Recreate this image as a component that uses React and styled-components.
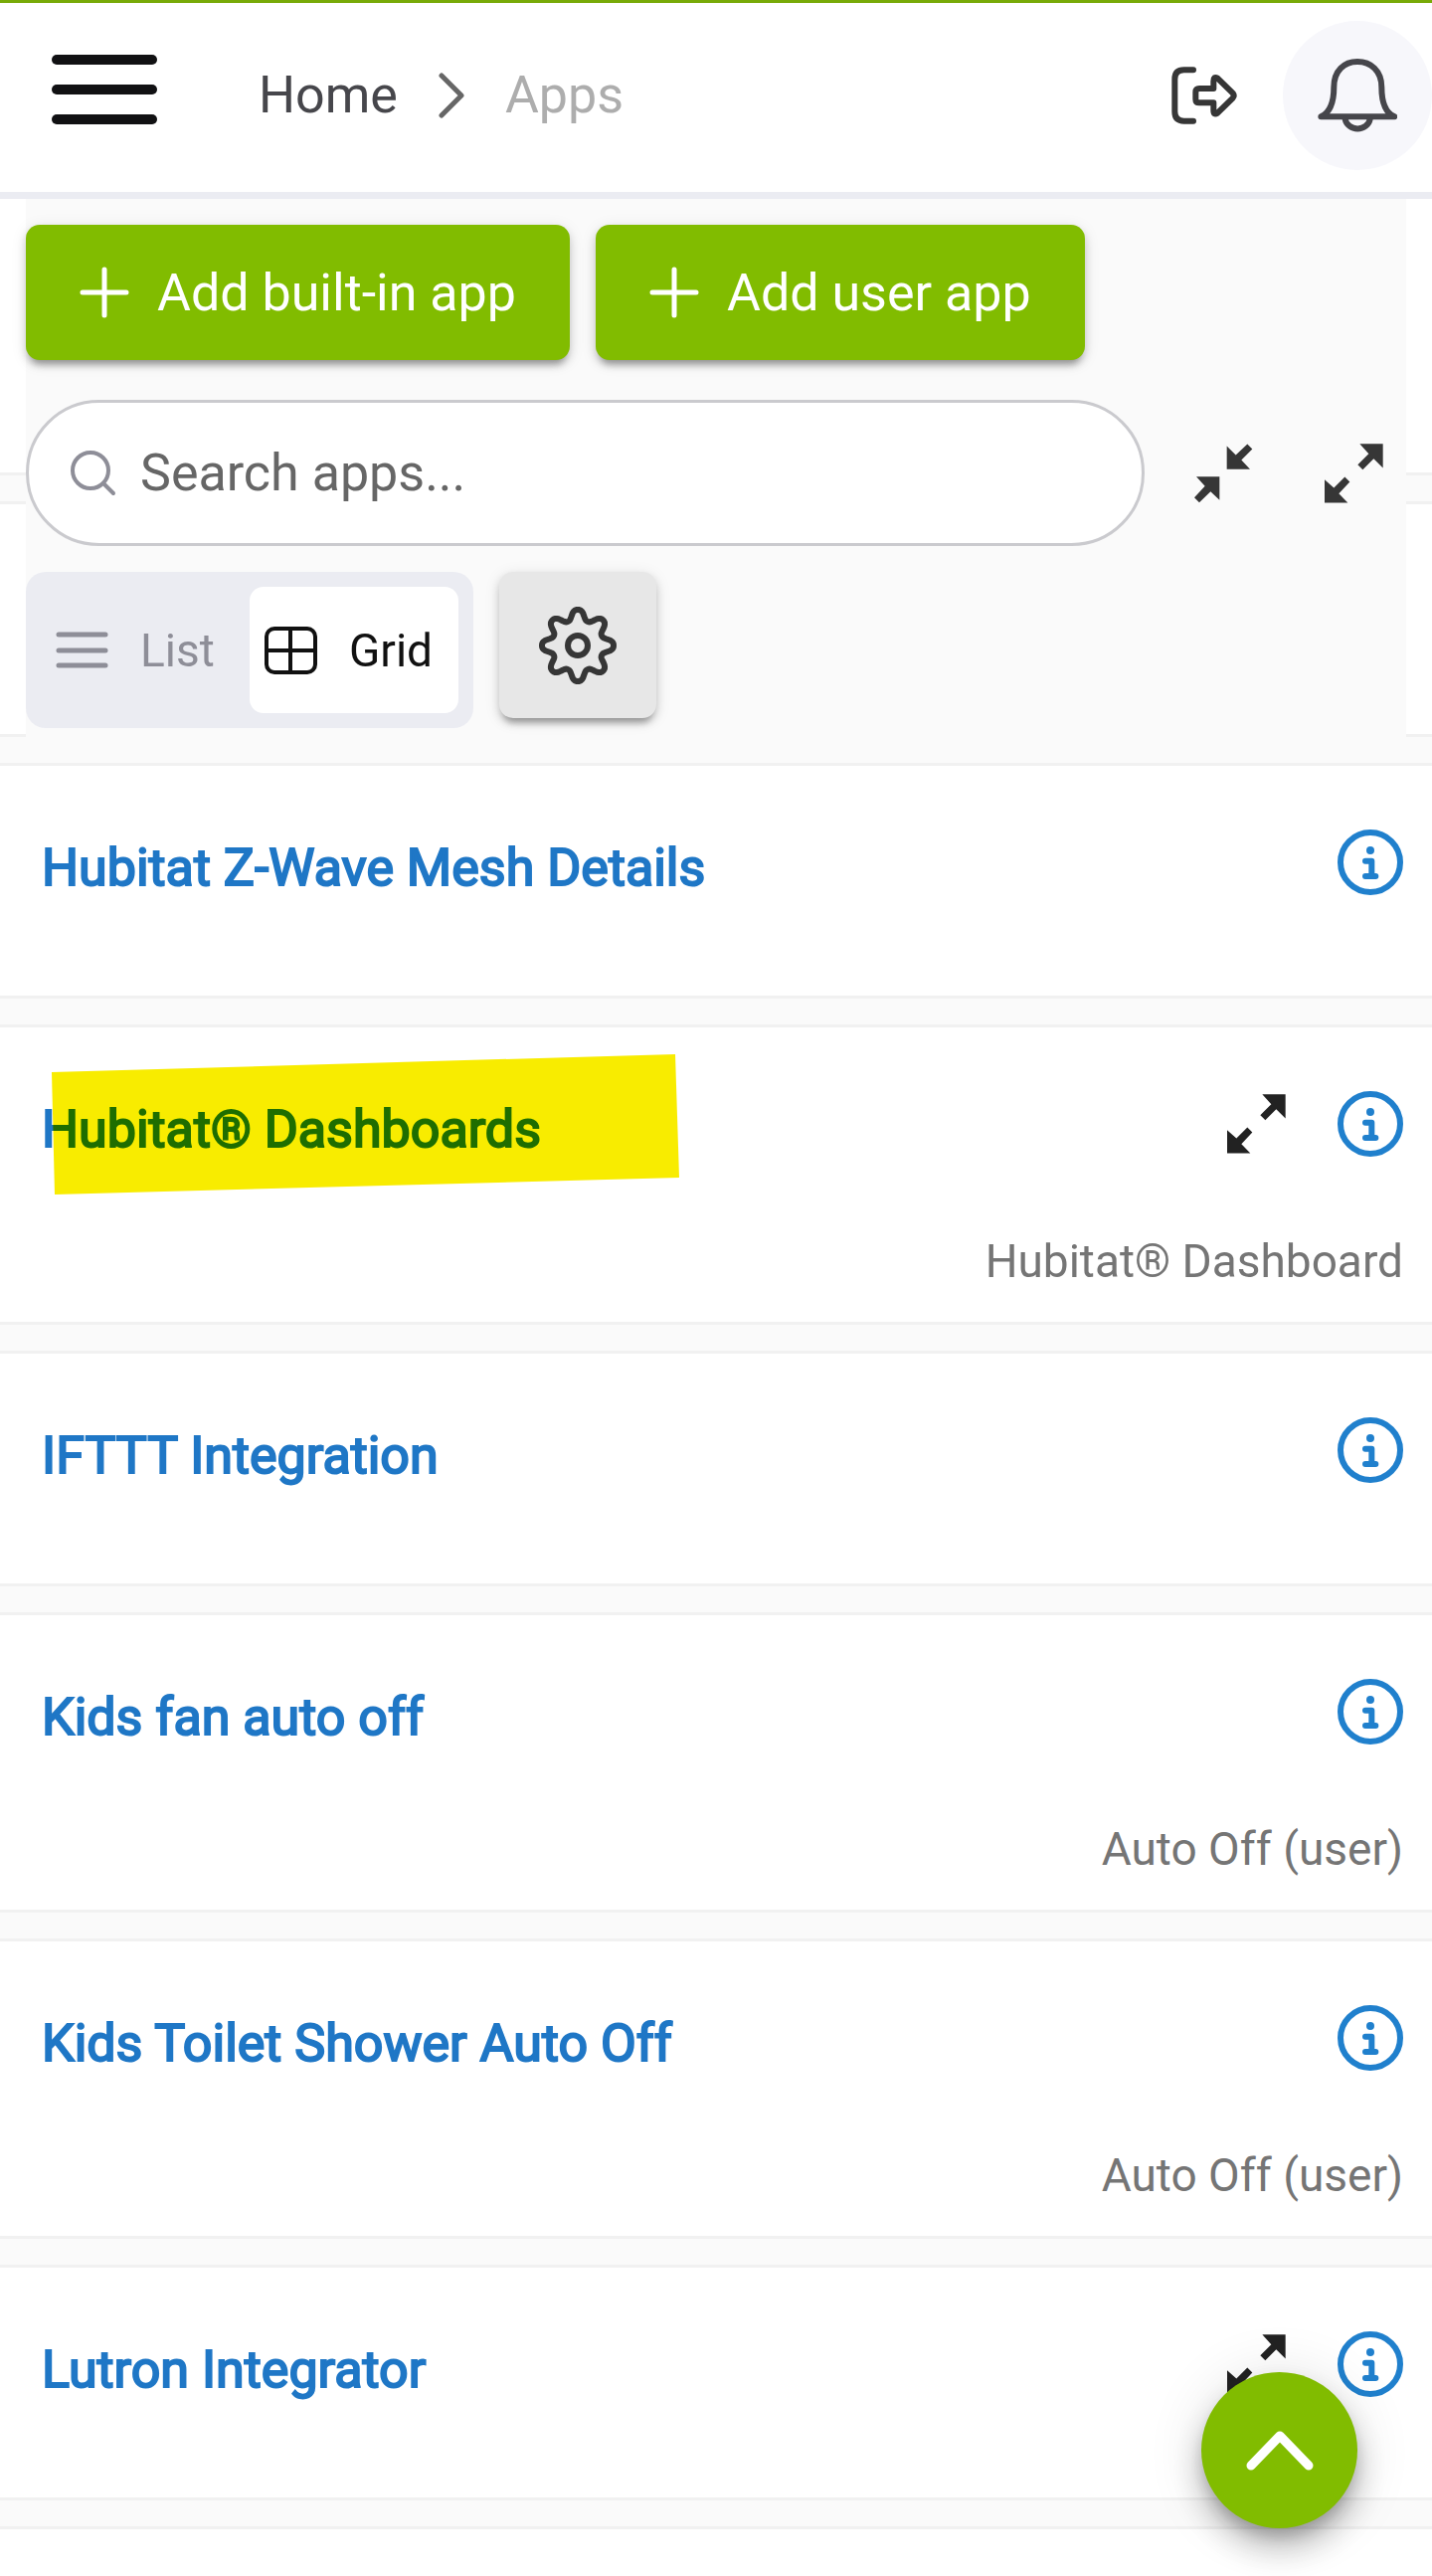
import styled, { createGlobalStyle } from "styled-components";

const apps = [
  { name: "Hubitat Z-Wave Mesh Details" },
  {
    name: "Hubitat® Dashboards",
    type: "Hubitat® Dashboard",
    expandable: true,
    marked: true,
  },
  { name: "IFTTT Integration" },
  { name: "Kids fan auto off", type: "Auto Off (user)" },
  { name: "Kids Toilet Shower Auto Off", type: "Auto Off (user)" },
  { name: "Lutron Integrator", expandable: true },
];

const BellIcon = () => (
  <svg width="80" height="80" viewBox="0 0 240 240" fill="none" stroke="#46464b" strokeWidth="18" strokeLinecap="round" strokeLinejoin="round">
    <path d="M10 184C40 170 49 130 49 95C49 45 80 18 120 18C160 18 193 45 193 95C193 130 200 170 232 184Z" />
    <path d="M83 191A38 35 0 0 0 158 191" />
  </svg>
);

const LogoutIcon = () => (
  <svg width="66" height="58" viewBox="0 0 198 174" fill="none" stroke="#363636" strokeWidth="18" strokeLinecap="round" strokeLinejoin="round">
    <path d="M66 10H38Q10 10 10 38V136Q10 164 38 164H66" />
    <path d="M84 66H127V44Q127 28 139 35L185 80Q191 88 185 95L139 140Q127 148 127 132V109H84Q73 109 73 98V77Q73 66 84 66Z" />
  </svg>
);

const ExpandIcon = () => (
  <svg width="59" height="60" viewBox="0 0 177 179" fill="currentColor">
    <path d="M106 0H176V73L148 45L115 78L100 63L133 30Z" />
    <path d="M0 108V178H70L43 150L76 115L61 100L28 133Z" />
  </svg>
);

const CollapseIcon = () => (
  <svg width="59" height="60" viewBox="0 0 177 177" fill="currentColor">
    <path d="M98 6L125 33L160 0L175 15L142 48L168 76H98Z" />
    <path d="M6 98H76V169L49 143L15 176L0 161L32 127Z" />
  </svg>
);

const InfoIcon = () => (
  <svg width="66" height="66" viewBox="0 0 198 198" fill="none" stroke="#2080cd" strokeWidth="18" strokeLinecap="round" strokeLinejoin="round">
    <circle cx="99" cy="99" r="90" />
    <circle cx="99" cy="63" r="12" fill="#2080cd" stroke="none" />
    <path d="M84 95H103V141M84 141H115" />
  </svg>
);

const PlusIcon = () => (
  <svg width="50" height="52" viewBox="0 0 50 52" stroke="#fff" strokeWidth="5" strokeLinecap="round">
    <path d="M3 26H47M25 3V49" />
  </svg>
);

const SearchIcon = () => (
  <svg width="46" height="46" viewBox="0 0 46 46" fill="none" stroke="#8e8e98" strokeWidth="4" strokeLinecap="round">
    <circle cx="20" cy="20" r="18" />
    <path d="M33 33L43 43" />
  </svg>
);

const ListIcon = () => (
  <svg width="53" height="38" viewBox="0 0 53 38" stroke="#8e8e98" strokeWidth="5" strokeLinecap="round">
    <path d="M3 3H50M3 19H50M3 34H50" />
  </svg>
);

const GridIcon = () => (
  <svg width="53" height="48" viewBox="0 0 53 48" fill="none" stroke="#111" strokeWidth="4">
    <rect x="2" y="2" width="49" height="44" rx="8" />
    <path d="M26 2V46M2 24H51" />
  </svg>
);

// eight rounded teeth around the centre
const gearPath = () => {
  const points = [];
  for (let i = 0; i < 160; i++) {
    const a = (i / 160) * Math.PI * 2;
    const wave = Math.cos(8 * a);
    const r = 31 + 5 * (1.3 * wave - 0.3 * wave ** 3);
    points.push(`${(40 + r * Math.cos(a)).toFixed(1)} ${(40 + r * Math.sin(a)).toFixed(1)}`);
  }
  return `M${points.join("L")}Z`;
};

const GearIcon = () => (
  <svg width="80" height="80" viewBox="0 0 80 80" fill="none" stroke="#363636" strokeWidth="6" strokeLinejoin="round">
    <path d={gearPath()} />
    <circle cx="40" cy="40" r="10" />
  </svg>
);

const App = () => {
  return (
    <Page>
      <GlobalStyle />
      <Header>
        <MenuButton aria-label="Menu">
          <MenuBar />
          <MenuBar />
          <MenuBar />
        </MenuButton>
        <Breadcrumb aria-label="Breadcrumb">
          <HomeLink href="#home">Home</HomeLink>
          <svg width="28" height="46" viewBox="0 0 28 46" fill="none" stroke="#666" strokeWidth="5" strokeLinecap="round" strokeLinejoin="round">
            <path d="M4 3L24 23L4 43" />
          </svg>
          <CurrentPage>Apps</CurrentPage>
        </Breadcrumb>
        <IconButton aria-label="Log out">
          <LogoutIcon />
        </IconButton>
        <BellButton aria-label="Notifications">
          <BellIcon />
        </BellButton>
      </Header>
      <Main>
        <Toolbar>
          <ButtonRow>
            <AddButton>
              <PlusIcon />
              Add built-in app
            </AddButton>
            <AddButton>
              <PlusIcon />
              Add user app
            </AddButton>
          </ButtonRow>
          <SearchRow>
            <SearchBox>
              <SearchIcon />
              <SearchInput type="search" aria-label="Search apps" placeholder="Search apps..." />
            </SearchBox>
            <SearchActions>
              <IconButton aria-label="Collapse all">
                <CollapseIcon />
              </IconButton>
              <IconButton aria-label="Expand all">
                <ExpandIcon />
              </IconButton>
            </SearchActions>
          </SearchRow>
          <ViewRow>
            <Segmented>
              <Segment>
                <ListIcon />
                List
              </Segment>
              <Segment $active>
                <GridIcon />
                Grid
              </Segment>
            </Segmented>
            <SettingsButton aria-label="Settings">
              <GearIcon />
            </SettingsButton>
          </ViewRow>
        </Toolbar>
        <CardList>
          <CoveredCard $first />
          <CoveredCard />
          {apps.map((app) => (
            <Card key={app.name}>
              <CardHead>
                <AppLink href="#app">{app.name}</AppLink>
                {app.expandable && (
                  <IconButton $dark aria-label={`Expand ${app.name}`}>
                    <ExpandIcon />
                  </IconButton>
                )}
                <IconButton aria-label={`About ${app.name}`}>
                  <InfoIcon />
                </IconButton>
              </CardHead>
              {app.type && <AppType>{app.type}</AppType>}
              {app.marked && <Marker />}
            </Card>
          ))}
          <LastCard />
        </CardList>
      </Main>
      <TopButton aria-label="Back to top">
        <svg width="68" height="40" viewBox="0 0 68 40" fill="none" stroke="#fff" strokeWidth="9" strokeLinecap="round" strokeLinejoin="round">
          <path d="M5 35L34 5L63 35" />
        </svg>
      </TopButton>
    </Page>
  );
};
export default App;

const GlobalStyle = createGlobalStyle`
  * {
    box-sizing: border-box;
  }
  body {
    margin: 0;
    background-color: #fafafa;
    font-family: Roboto, "Liberation Sans", sans-serif;
  }
  button {
    padding: 0;
    border: none;
    background: none;
    font-family: inherit;
    cursor: pointer;
  }
  svg {
    display: block;
    flex-shrink: 0;
  }
`;
const Page = styled.div`
  display: flex;
  flex-direction: column;
  min-height: 100vh;
`;
const Header = styled.header`
  display: flex;
  align-items: center;
  height: 200px;
  padding: 0 0 4px 52px;
  background-color: #fff;
  border-top: 3px solid #78aa08;
  border-bottom: 7px solid #ebecf2;
`;
const MenuButton = styled.button`
  display: flex;
  flex-direction: column;
  gap: 20px;
  margin-bottom: 12px;
`;
const MenuBar = styled.span`
  width: 106px;
  height: 10px;
  border-radius: 5px;
  background-color: #111113;
`;
const Breadcrumb = styled.nav`
  display: flex;
  align-items: center;
  flex: 1;
  gap: 40px;
  margin-left: 102px;
  font-size: 52px;
  line-height: 60px;
`;
const HomeLink = styled.a`
  color: #46464b;
  text-decoration: none;
`;
const CurrentPage = styled.span`
  color: #adadad;
`;
const IconButton = styled.button`
  color: ${(props) => (props.$dark ? "#222" : "#363636")};
`;
const BellButton = styled.button`
  display: flex;
  justify-content: center;
  align-items: center;
  width: 150px;
  height: 150px;
  margin-left: 46px;
  border-radius: 50%;
  background-color: #f7f7fb;
`;
const Main = styled.main`
  display: flex;
  flex-direction: column;
  flex: 1;
  position: relative;
`;
/* floats over the scrolled list */
const Toolbar = styled.div`
  position: absolute;
  top: 0;
  left: 26px;
  right: 26px;
  z-index: 1;
  padding: 26px 0 22px;
  background-color: #fafafa;
`;
const ButtonRow = styled.div`
  display: flex;
  gap: 26px;
`;
const AddButton = styled.button`
  display: flex;
  align-items: center;
  gap: 28px;
  height: 136px;
  padding: 0 54px;
  border-radius: 14px;
  background-color: #81bc00;
  color: #fff;
  font-size: 52px;
  box-shadow: 0 9px 6px -5px rgba(0, 0, 0, 0.25), 0 5px 8px rgba(0, 0, 0, 0.16),
    0 3px 16px rgba(0, 0, 0, 0.1);
`;
const SearchRow = styled.div`
  display: flex;
  align-items: center;
  gap: 50px;
  margin-top: 40px;
`;
const SearchBox = styled.label`
  display: flex;
  align-items: center;
  flex: 1;
  gap: 24px;
  height: 147px;
  padding: 0 42px;
  border: 3px solid #cacace;
  border-radius: 74px;
  background-color: #fff;
`;
const SearchInput = styled.input`
  flex: 1;
  min-width: 0;
  padding: 0;
  border: none;
  outline: none;
  background: none;
  font-family: inherit;
  font-size: 52px;
  &::placeholder {
    color: #666;
    opacity: 1;
  }
`;
const SearchActions = styled.div`
  display: flex;
  gap: 72px;
  padding-right: 23px;
`;
const ViewRow = styled.div`
  display: flex;
  gap: 26px;
  margin-top: 26px;
`;
const Segmented = styled.div`
  display: flex;
  padding: 15px;
  border-radius: 20px;
  background-color: #ebecf2;
`;
const Segment = styled.button`
  display: flex;
  align-items: center;
  gap: 32px;
  min-width: 210px;
  height: 127px;
  padding: 0 26px 0 15px;
  border-radius: 14px;
  background-color: ${(props) => (props.$active ? "#fff" : "transparent")};
  color: ${(props) => (props.$active ? "#111" : "#8e8e98")};
  font-size: 46px;
`;
const SettingsButton = styled.button`
  display: flex;
  justify-content: center;
  align-items: center;
  width: 158px;
  height: 147px;
  border-radius: 14px;
  background-color: #e7e7e7;
  box-shadow: 0 9px 6px -5px rgba(0, 0, 0, 0.25), 0 5px 8px rgba(0, 0, 0, 0.16),
    0 3px 16px rgba(0, 0, 0, 0.1);
`;
const CardList = styled.div`
  display: flex;
  flex-direction: column;
  flex: 1;
  gap: 26px;
`;
const Card = styled.article`
  position: relative;
  min-height: 237px;
  padding: 60px 29px 0 42px;
  border: solid #f1f1f1;
  border-width: 3px 0;
  background-color: #fff;
`;
const CoveredCard = styled(Card)`
  height: ${(props) => (props.$first ? "278px" : "237px")};
  border-top-width: ${(props) => (props.$first ? "0" : "3px")};
`;
const LastCard = styled(Card)`
  flex: 1;
  min-height: 50px;
  padding: 0;
  border-bottom: none;
`;
const CardHead = styled.div`
  display: flex;
  align-items: center;
  gap: 52px;
  height: 74px;
`;
const AppLink = styled.a`
  flex: 1;
  padding-top: 12px;
  color: #1f77c6;
  font-size: 52px;
  font-weight: 400;
  line-height: 60px;
  text-decoration: none;
  -webkit-text-stroke: 2px currentColor;
`;
const AppType = styled.p`
  margin: 71px 0 31px;
  color: #757575;
  font-size: 46px;
  line-height: 60px;
  text-align: right;
`;
/* highlighter stroke across the app name */
const Marker = styled.span`
  position: absolute;
  top: 27px;
  left: 52px;
  width: 631px;
  height: 141px;
  background-color: #f8ec00;
  clip-path: polygon(0 18px, 627px 0, 631px 124px, 3px 141px);
  mix-blend-mode: multiply;
  pointer-events: none;
`;
const TopButton = styled.button`
  position: fixed;
  right: 75px;
  bottom: 48px;
  z-index: 2;
  display: flex;
  justify-content: center;
  align-items: center;
  width: 157px;
  height: 157px;
  border-radius: 50%;
  background-color: #81bc00;
  box-shadow: 0 10px 16px -3px rgba(0, 0, 0, 0.2), 0 20px 33px rgba(0, 0, 0, 0.24),
    0 3px 58px rgba(0, 0, 0, 0.12);
`;
